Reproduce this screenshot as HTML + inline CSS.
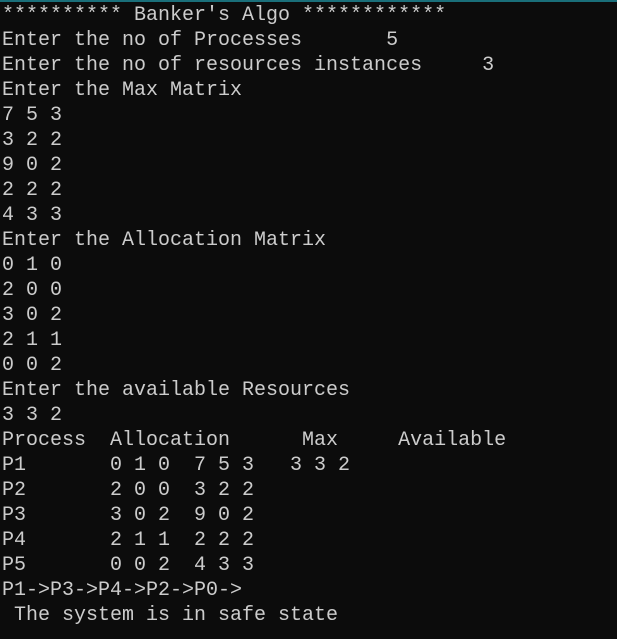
<!DOCTYPE html>
<html><head><meta charset="utf-8"><style>
html,body{margin:0;padding:0;background:#0c0c0c;width:617px;height:639px;overflow:hidden}
.top{position:absolute;left:0;top:0;width:617px;height:2px;background:#1a6f7a}
pre{position:absolute;left:2px;top:3px;margin:0;font-family:"Liberation Mono","DejaVu Sans Mono",monospace;font-size:20px;line-height:25px;color:#cccccc;white-space:pre}
</style></head><body><div class="top"></div><pre>********** Banker's Algo ************
Enter the no of Processes       5
Enter the no of resources instances     3
Enter the Max Matrix
7 5 3
3 2 2
9 0 2
2 2 2
4 3 3
Enter the Allocation Matrix
0 1 0
2 0 0
3 0 2
2 1 1
0 0 2
Enter the available Resources
3 3 2
Process  Allocation      Max     Available
P1       0 1 0  7 5 3   3 3 2
P2       2 0 0  3 2 2
P3       3 0 2  9 0 2
P4       2 1 1  2 2 2
P5       0 0 2  4 3 3
P1-&gt;P3-&gt;P4-&gt;P2-&gt;P0-&gt;
 The system is in safe state</pre></body></html>
